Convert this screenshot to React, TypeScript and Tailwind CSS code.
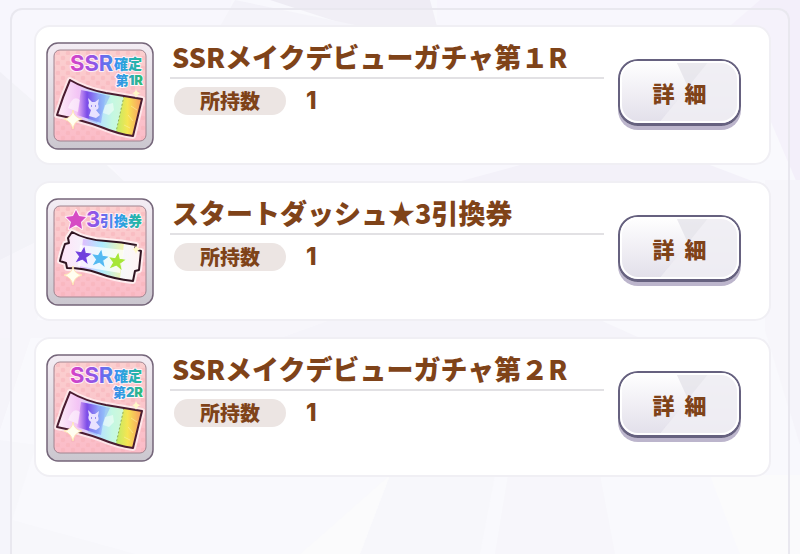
import { useId } from "react";

type TicketKind = "ssr" | "star";

interface Ticket {
  name: string;
  count: number;
  kind: TicketKind;
  round?: string;
}

const tickets: Ticket[] = [
  { name: "SSRメイクデビューガチャ第１R", count: 1, kind: "ssr", round: "第1R" },
  { name: "スタートダッシュ★3引換券", count: 1, kind: "star" },
  { name: "SSRメイクデビューガチャ第２R", count: 1, kind: "ssr", round: "第2R" },
];

function Facets() {
  return (
    <svg
      aria-hidden="true"
      className="absolute inset-0 h-full w-full"
      viewBox="0 0 800 554"
      preserveAspectRatio="none"
    >
      <path d="M0 0H232L218 55L100 165L0 72Z" fill="#f7f6fd" />
      <path d="M232 0H430L437 26H350L270 0Z" fill="#eeecf4" />
      <path d="M235 0L360 26H220Z" fill="#f3f2f9" />
      <path d="M437 0H760L720 60H437Z" fill="#f7f5fd" />
      <path d="M760 0H800V190L730 26Z" fill="#f3effa" />
      <path d="M0 72L110 168L125 182L40 240L0 260Z" fill="#f1f0f7" />
      <path d="M110 165H640L560 182H125Z" fill="#f7f6fd" />
      <path d="M520 165H710L760 184H450Z" fill="#f1eef8" />
      <path d="M0 260L40 240V310L0 430Z" fill="#f5f4fa" />
      <path d="M765 180H800V445L765 330Z" fill="#f5f4fa" />
      <path d="M0 320H330L280 338H0Z" fill="#f6f4fb" />
      <path d="M330 320H600L640 338H280Z" fill="#f3f2f9" />
      <path d="M36 445L12 520L135 554H0V440Z" fill="#f5f5fb" />
      <path d="M390 475H495L480 554H360Z" fill="#f6f6fb" />
      <path d="M508 475H600L615 554H495Z" fill="#f5f4fa" />
      <path d="M322 535L390 475L360 554H300Z" fill="#fafafc" />
      <path d="M710 475H800V554H740Z" fill="#fafafc" />
    </svg>
  );
}

function SsrTicket({ id }: { id: string }) {
  const outline = "M30 45Q45 54 66 58Q84 61 102 64L93 101Q78 99 61 92Q42 85 17 80Q23 61 30 45Z";
  return (
    <g>
      <path d={outline} fill="#fff" stroke="#fff" strokeOpacity=".6" strokeWidth="6" strokeLinejoin="round" />
      <path d={outline} fill={`url(#${id}-paper)`} />
      <path d="M41 55L66 60L61 88L37 80Z" fill={`url(#${id}-art)`} />
      <path d="M60 59L70 61L57 88L48 85Z" fill="#7f9ff5" opacity=".45" />
      <path d="M84 61L102 64L93 101L76 97Z" fill={`url(#${id}-stub)`} />
      <path d="M84 61L76 97" stroke="#8fae5b" strokeWidth="1" strokeDasharray="2 2" />
      <path
        d="M49 68L48 63L52 67H55L59 64L58 69Q60 74 56 75L60 80L56 83L49 81L51 75Q47 72 49 68Z"
        fill="#e9e2ff"
      />
      <path d="M51 71H52M55 71H56" stroke="#8175e9" strokeWidth="1.3" />
      <path d="M28 73Q33 59 40 65L38 77M65 70L73 68L74 75L69 80L63 78" fill="#fff" opacity=".5" />
      <path d="M88 80L93 86M84 90L90 93M91 71L97 75" stroke="#fff3a0" opacity=".6" />
      <path d={outline} fill="none" stroke="#4a1c30" strokeWidth="2" strokeLinejoin="round" />
    </g>
  );
}

function StarTicket({ id }: { id: string }) {
  const outline =
    "M32 41Q46 49 66 50Q82 51 96 54L95 58L101 60L99 79L95 80L93 90Q74 88 58 82Q44 77 27 77L26 72L20 70Q22 61 25 53L29 52L28 47Z";
  const star = "M0-7L2-2L7-2L3 2L5 7L0 4L-5 7L-3 2L-7-2L-2-2Z";
  return (
    <g>
      <path d={outline} fill="#fff" stroke="#fff" strokeOpacity=".7" strokeWidth="6" strokeLinejoin="round" />
      <path d={outline} fill={`url(#${id}-pale)`} />
      <path d="M43 48L84 52L80 88L60 82L40 77Z" fill={`url(#${id}-rainbow)`} opacity=".55" />
      <path d="M40 54L84 59L80 82L38 75Z" fill="#fff" opacity=".75" />
      <path d={star} transform="translate(43 64) rotate(9)" fill="#7040dd" stroke="#7040dd" />
      <path d={star} transform="translate(60 67) rotate(9)" fill="#54baf2" stroke="#54baf2" />
      <path d={star} transform="translate(77 70) rotate(9)" fill="#a6e638" stroke="#a6e638" />
      <path d={outline} fill="none" stroke="#301522" strokeWidth="2" strokeLinejoin="round" />
    </g>
  );
}

function TicketIcon({ kind, round }: { kind: TicketKind; round?: string }) {
  const id = useId();
  return (
    <svg
      aria-hidden="true"
      viewBox="6 7 108 108"
      className="h-[108px] w-[108px] shrink-0 font-['Inter','Noto_Sans_CJK_JP',sans-serif] font-bold"
    >
      <defs>
        <linearGradient id={`${id}-frame`} x2="0" y2="1">
          <stop stopColor="#f4edf4" />
          <stop offset="1" stopColor="#cbc7cf" />
        </linearGradient>
        <linearGradient id={`${id}-pink`} x2="0" y2="1">
          <stop stopColor="#fbcfcf" />
          <stop offset="1" stopColor="#fbbcc8" />
        </linearGradient>
        <pattern id={`${id}-dots`} width="10" height="10" patternUnits="userSpaceOnUse">
          <circle cx="3" cy="3" r="2.3" fill="#f6b0b6" opacity=".45" />
          <circle cx="8" cy="8" r="2.3" fill="#f6b0b6" opacity=".45" />
        </pattern>
        <linearGradient id={`${id}-title`} gradientUnits="userSpaceOnUse" x1="29" x2="103">
          <stop stopColor="#e33fc2" />
          <stop offset=".4" stopColor="#805bed" />
          <stop offset=".68" stopColor="#2f9cec" />
          <stop offset="1" stopColor="#24bd8c" />
        </linearGradient>
        <linearGradient id={`${id}-round`} gradientUnits="userSpaceOnUse" x1="66" x2="103">
          <stop stopColor="#507df0" />
          <stop offset=".5" stopColor="#2c9ee0" />
          <stop offset="1" stopColor="#2fbe6d" />
        </linearGradient>
        <linearGradient id={`${id}-paper`}>
          <stop stopColor="#fff0f8" />
          <stop offset=".25" stopColor="#f3c4f5" />
          <stop offset=".5" stopColor="#b5e0ff" />
          <stop offset=".65" stopColor="#c4f8e2" />
          <stop offset="1" stopColor="#e6f8c8" />
        </linearGradient>
        <linearGradient id={`${id}-art`}>
          <stop stopColor="#f0b5f5" />
          <stop offset=".35" stopColor="#7a4be8" />
          <stop offset=".65" stopColor="#8b8cf5" />
          <stop offset="1" stopColor="#a8e2ff" />
        </linearGradient>
        <linearGradient id={`${id}-stub`}>
          <stop stopColor="#bdec67" />
          <stop offset=".45" stopColor="#f6e552" />
          <stop offset="1" stopColor="#f99a62" />
        </linearGradient>
        <linearGradient id={`${id}-pale`}>
          <stop stopColor="#ffe3f7" />
          <stop offset=".5" stopColor="#eefcff" />
          <stop offset="1" stopColor="#fff4f4" />
        </linearGradient>
        <linearGradient id={`${id}-rainbow`}>
          <stop stopColor="#d68aff" />
          <stop offset=".5" stopColor="#77dfff" />
          <stop offset="1" stopColor="#f7f16a" />
        </linearGradient>
      </defs>
      <rect x="7" y="8" width="106" height="106" rx="11" fill={`url(#${id}-frame)`} stroke="#75667a" strokeWidth="1.5" />
      <rect x="14" y="15" width="92" height="91" rx="6" fill={`url(#${id}-pink)`} />
      <rect x="14" y="15" width="92" height="91" rx="6" fill={`url(#${id}-dots)`} stroke="#a08490" />
      {kind === "ssr" ? <SsrTicket id={id} /> : <StarTicket id={id} />}
      <g fill={`url(#${id}-title)`} stroke="#ffeef8" strokeWidth="2" paintOrder="stroke" strokeLinejoin="round">
        {kind === "ssr" ? (
          <>
            <text x="30" y="36" fontSize="22">SSR</text>
            <text x="74" y="34" fontSize="14" className="font-black">確定</text>
          </>
        ) : (
          <>
            <path d="M36 19L39 25L46 26L41 31L42 38L36 34L29 38L31 31L26 26L33 25Z" fill="#d64bc4" />
            <text x="46" y="36" fontSize="22">3</text>
            <text x="60" y="35" fontSize="14" className="font-black">引換券</text>
          </>
        )}
      </g>
      {round && (
        <text
          x="103"
          y="50"
          fontSize="13"
          textAnchor="end"
          className="font-black"
          fill={`url(#${id}-round)`}
          stroke="#fff5f8"
          strokeWidth="2"
          paintOrder="stroke"
          strokeLinejoin="round"
        >
          {round}
        </text>
      )}
      <path
        d="M33 75Q34 83 42 84Q34 86 33 94Q31 86 24 84Q32 83 33 75Z"
        fill="#fffef0"
        stroke="#ffe6ad"
        strokeWidth=".8"
      />
      <path d="M96 54Q97 58 101 58Q97 59 96 63Q95 59 92 58Q95 58 96 54Z" fill="#fff8c8" />
    </svg>
  );
}

function DetailButton({ name }: { name: string }) {
  return (
    <button
      type="button"
      aria-label={`${name} 詳細`}
      className="relative h-[67px] w-[123px] shrink-0 rounded-[20px] border-2 border-b-3 border-[#66617f] bg-linear-to-b from-white to-[#e2dfea] text-[22px] leading-7 font-black text-[#7f4319] shadow-[0_4px_0_#bcb5cc]"
    >
      <svg
        aria-hidden="true"
        viewBox="0 0 119 62"
        preserveAspectRatio="none"
        className="absolute inset-0 h-full w-full rounded-[18px]"
      >
        <path d="M56 0H119V62H39L68 26Z" fill="#e3e1e8" opacity=".75" />
        <path d="M89 0H119V62H39Z" fill="#f5f3f8" opacity=".6" />
        <rect x="1" y="1" width="117" height="60" rx="17" fill="none" stroke="#fff" strokeWidth="2" />
      </svg>
      <span className="relative flex justify-center gap-2.5">
        <span>詳</span>
        <span>細</span>
      </span>
    </button>
  );
}

function TicketCard({ ticket }: { ticket: Ticket }) {
  return (
    <li className="flex h-[140px] items-start rounded-2xl border-2 border-[#f0eff4] bg-white pt-[15px] pr-7 pl-2.5">
      <TicketIcon kind={ticket.kind} round={ticket.round} />
      <div className="ml-4 min-w-0 flex-1">
        <h2 className="h-[37px] border-b-2 border-[#e2e1e4] pl-0.5 text-[27px] leading-[30px] font-black whitespace-nowrap">
          {ticket.name}
        </h2>
        <dl className="mt-2 flex items-center pl-1 leading-7 font-black">
          <dt className="w-28 rounded-full bg-[#ece5e3] text-center text-[20px]">所持数</dt>
          <dd className="ml-5 font-['Inter',sans-serif] text-[24px] font-extrabold">{ticket.count}</dd>
        </dl>
      </div>
      <div className="mt-[17px] ml-3.5">
        <DetailButton name={ticket.name} />
      </div>
    </li>
  );
}

export default function App() {
  return (
    <main className="relative flex min-h-screen flex-col overflow-hidden bg-[#f8f8fd] px-2.5 pt-2 font-['Noto_Sans_CJK_JP','Noto_Sans',sans-serif] text-[#7f4319]">
      <Facets />
      <section
        aria-label="所持チケット"
        className="relative flex-1 rounded-t-xl border-2 border-b-0 border-[#e9e8ef] bg-white/20 pt-[15px] pr-[17px] pl-[22px]"
      >
        <ul className="flex flex-col gap-4">
          {tickets.map((ticket) => (
            <TicketCard key={ticket.name} ticket={ticket} />
          ))}
        </ul>
      </section>
    </main>
  );
}
